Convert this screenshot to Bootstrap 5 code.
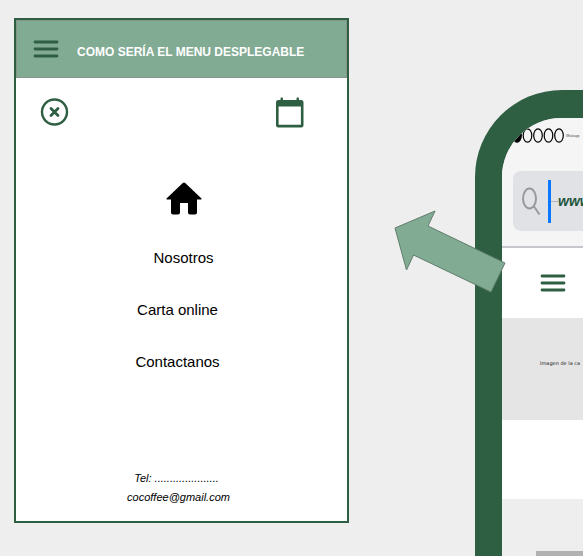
<!DOCTYPE html>
<html lang="es">
<head>
<meta charset="utf-8">
<meta name="viewport" content="width=device-width, initial-scale=1">
<title>Menú desplegable</title>
<link href="https://cdn.jsdelivr.net/npm/bootstrap@5.3.0/dist/css/bootstrap.min.css" rel="stylesheet">
<style>
:root { --forest: #2f5f43; --sage: #82ab94; }
body { background: #eee; font-family: "Liberation Sans", Arial, sans-serif; color: #000; }
.board { gap: 126px; padding: 18px 0 0 14px; }
.menu-panel { border: 2px solid var(--forest); margin-bottom: 33px; }
.menu-head { background: var(--sage); border: 1px solid #84968c; height: 58px; padding: 0 16px; gap: 18px; }
.menu-head h1 { font-size: 12px; line-height: 16px; padding-top: 6px; }
.plain-btn { background: none; border: 0; padding: 0; color: var(--forest); line-height: 0; }
.plain-btn svg, .home-link svg { display: block; }
.tool-row { padding: 18px 42px 0 23px; }
.menu-top { margin: 54px 0 0 4px; gap: 31px; }
.menu-rest { margin: 28px 8px 0 0; gap: 28px; }
.menu-link { color: #000; font-size: 15px; line-height: 24px; }
.home-link { color: #000; }
.contact { font-size: 11px; line-height: 19px; font-style: italic; padding-bottom: 14px; margin-right: 6px; }
.contact a { color: #000; }
.contact span { margin-right: 4px; }
.phone-wrap { flex: 0 0 108px; min-width: 0; margin-top: 72px; }
.phone { min-width: 0; border: solid var(--forest); border-width: 28px 0 0 27px; border-radius: 87px 0 0 0; background: #eee; }
.browser-bar { background: #f5f5f5; border-bottom: 2px solid #c6c6cc; padding: 10px 0 15px 11px; }
.status { height: 15px; gap: 2px; font-size: 3px; color: #444; line-height: 12px; }
.status svg { margin-left: -1px; }
.address { background: #e1e2e6; height: 60px; border-radius: 8px 0 0 8px; margin-top: 28px; padding-left: 9px; }
.caret { width: 3px; height: 43px; background: #0a78ff; margin-left: 7px; }
.dash { width: 7px; height: 1px; background: #b4b5b9; }
.address input { width: 0; border: 0; background: none; padding: 0; outline: 0; min-width: 0; font-size: 14px; line-height: 20px; font-weight: 700; font-style: italic; color: #1f5540; }
.site-head { background: #fff; height: 70px; padding-left: 38px; }
.hero { background: #e5e5e5; height: 102px; padding: 39px 0 0 38px; font: 5px/12px "DejaVu Sans", sans-serif; color: #222; }
.blank { background: #fff; height: 79px; }
.tile { background: #b1b1b1; margin: 52px 0 0 34px; }
.arrow { position: absolute; left: -82px; top: 119px; pointer-events: none; }
</style>
<script src="https://cdn.jsdelivr.net/npm/bootstrap@5.3.0/dist/js/bootstrap.bundle.min.js"></script>
</head>
<body>
<main class="board d-flex min-vh-100 overflow-hidden">
  <section class="menu-panel flex-fill d-flex flex-column bg-white">
    <header class="menu-head d-flex align-items-center">
      <button class="plain-btn" type="button" aria-label="Menú">
        <svg width="26" height="18" viewBox="0 0 26 18" stroke="currentColor" stroke-width="2.8" stroke-linecap="round"><path d="M2 2H24M2 9H24M2 16H24"/></svg>
      </button>
      <h1 class="fw-bold text-white text-nowrap mb-0">COMO SERÍA EL MENU DESPLEGABLE</h1>
    </header>
    <div class="tool-row d-flex justify-content-between">
      <button class="plain-btn" type="button" aria-label="Cerrar">
        <svg width="31" height="32" viewBox="0 0 31 32" fill="none" stroke="currentColor" stroke-width="2.4"><circle cx="15.5" cy="16" r="12.5"/><path stroke-width="2.8" stroke-linecap="round" d="M12 12.5l7 7M19 12.5l-7 7"/></svg>
      </button>
      <button class="plain-btn" type="button" aria-label="Calendario">
        <svg width="30" height="32" viewBox="0 0 30 32" fill="currentColor"><path fill-rule="evenodd" d="M5.500 2.500Q6.700 0 8 2.500V4H21.500V2.500Q22.700 0 24 2.500V4H26Q28.500 4 28.500 6V29Q28.500 31.500 26 31.500H3.500Q1 31.500 1 29V6Q1 4 3.500 4H5.500zM3.600 10.500V28.800H25.900V10.500z"/></svg>
      </button>
    </div>
    <nav class="d-flex flex-column">
      <div class="menu-top d-flex flex-column align-items-center">
        <a class="home-link" href="#" aria-label="Inicio">
          <svg width="36" height="33" viewBox="0 0 36 33" fill="currentColor"><path d="M16.8 1Q18 0 19.2 1L35.5 16.5Q36 17.5 35 17.5H31V30.5Q31 32.5 29 32.5H24Q22 32.5 22 30.5V21H14V30.5Q14 32.5 12 32.5H7Q5 32.5 5 30.5V17.5H1Q0 17.5 .5 16.5z"/></svg>
        </a>
        <a class="menu-link text-decoration-none" href="#">Nosotros</a>
      </div>
      <div class="menu-rest d-flex flex-column align-items-center">
        <a class="menu-link text-decoration-none" href="#">Carta online</a>
        <a class="menu-link text-decoration-none" href="#">Contactanos</a>
      </div>
    </nav>
    <footer class="contact mt-auto text-center">
      <div><span>Tel: .....................</span></div>
      <a class="text-decoration-none" href="mailto:cocoffee@gmail.com">cocoffee@gmail.com</a>
    </footer>
  </section>
  <div class="phone-wrap d-flex position-relative">
    <section class="phone flex-fill overflow-hidden d-flex flex-column">
      <div class="browser-bar">
        <div class="status d-flex align-items-center text-nowrap">
          <svg class="flex-shrink-0" width="52" height="15" viewBox="0 0 52 15" fill="none" stroke="#000" stroke-width="1.2"><ellipse cx="5" cy="7.5" rx="4.3" ry="6.7" fill="#000"/><ellipse cx="15.5" cy="7.5" rx="4.3" ry="6.7"/><ellipse cx="26" cy="7.5" rx="4.3" ry="6.7"/><ellipse cx="36.5" cy="7.5" rx="4.3" ry="6.7"/><ellipse cx="47" cy="7.5" rx="4.3" ry="6.7"/></svg>
          <span>Whatsapp</span>
        </div>
        <div class="address d-flex align-items-center">
          <svg class="flex-shrink-0" width="19" height="29" viewBox="0 0 19 29" fill="none" stroke="#98999c" stroke-width="2"><ellipse cx="7.5" cy="11.5" rx="6.5" ry="10"/><path d="M12 19.5l5.500 8"/></svg>
          <span class="caret flex-shrink-0"></span><span class="dash flex-shrink-0"></span>
          <input class="flex-fill" type="text" value="www." aria-label="Dirección">
        </div>
      </div>
      <div class="site-head d-flex align-items-center">
        <button class="plain-btn" type="button" aria-label="Menú del sitio">
          <svg width="26" height="18" viewBox="0 0 26 18" stroke="currentColor" stroke-width="2.8" stroke-linecap="round"><path d="M2 2H24M2 9H24M2 16H24"/></svg>
        </button>
      </div>
      <div class="hero text-nowrap overflow-hidden">Imagen de la ca</div>
      <div class="blank"></div>
      <div class="tile flex-fill"></div>
    </section>
    <svg class="arrow" width="114" height="86" viewBox="0 0 114 86" fill="#82ab94" stroke="#5f7d6c"><path d="M2 19L42 2L35 17L112 54L98 83L20.5 46L13.5 61z"/></svg>
  </div>
</main>
</body>
</html>
